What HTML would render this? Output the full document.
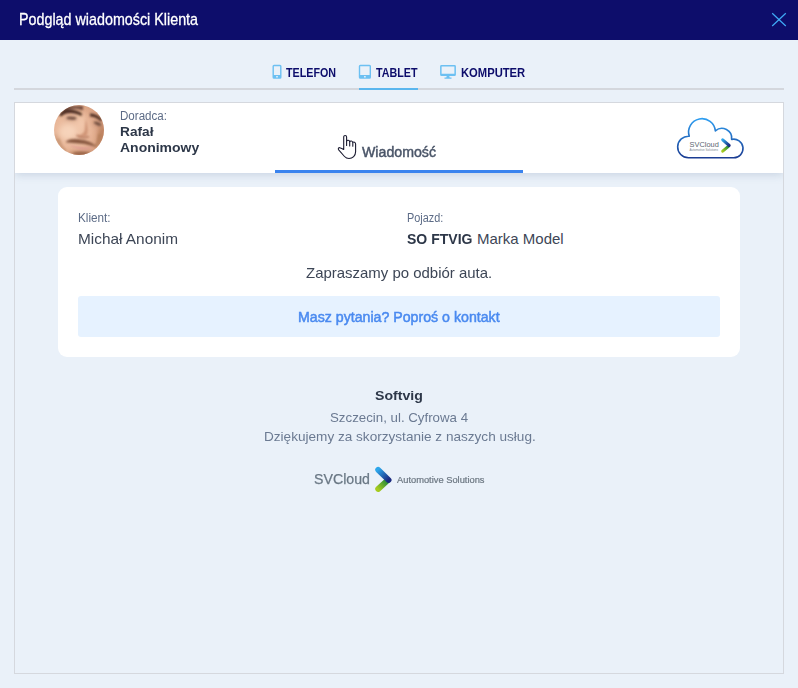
<!DOCTYPE html>
<html lang="pl">
<head>
<meta charset="utf-8">
<title>Podgląd wiadomości Klienta</title>
<style>
html,body{margin:0;padding:0;}
body{width:798px;height:688px;overflow:hidden;background:#eaf1f9;font-family:"Liberation Sans",sans-serif;position:relative;}
.abs{position:absolute;}
.t{position:absolute;white-space:nowrap;line-height:1;transform-origin:0 0;}
#hdr{left:0;top:0;width:798px;height:40px;background:#0d0d6b;}
#tabline{left:14px;top:88px;width:770px;height:2px;background:#d4d7dd;}
#tabactive{left:359px;top:88px;width:59px;height:2px;background:#5ab6ee;}
#frame{left:14px;top:102px;width:768px;height:570px;border:1px solid #d5d8de;overflow:hidden;}
#whitehdr{left:0;top:0;width:768px;height:70px;background:#fff;box-shadow:0 2px 8px rgba(120,140,170,.28);}
#msgline{left:275px;top:170px;width:248px;height:3px;background:#3a83ee;}
#card{left:58px;top:187px;width:682px;height:170px;background:#fff;border-radius:9px;}
#bluebox{left:78px;top:296px;width:642px;height:41px;background:#e6f2ff;border-radius:3px;}
.tab{font-weight:bold;font-size:13px;color:#0d0d6b;}
</style>
</head>
<body>
<div id="hdr" class="abs"></div>
<span class="t" id="title" style="left:19px;top:11px;font-size:17px;color:#fff;transform:scaleX(.842);-webkit-text-stroke:.3px #fff;">Podgląd wiadomości Klienta</span>
<svg class="abs" style="left:770px;top:11px" width="18" height="18" viewBox="0 0 18 18"><path d="M2.2 2.2 L15.8 15 M15.8 2.2 L2.2 15" stroke="#3fa9f5" stroke-width="1.250" fill="none"/></svg>

<!-- tabs -->
<svg class="abs" style="left:272px;top:64px" width="10" height="16" viewBox="0 0 10 16"><path fill-rule="evenodd" fill="#6cc0f2" d="M2 .8h6a1.500 1.500 0 0 1 1.500 1.500v11a1.500 1.500 0 0 1-1.500 1.500H2A1.500 1.500 0 0 1 .5 13.300V2.300A1.500 1.500 0 0 1 2 .8zM1.900 2.300v8.700h6.200V2.300zM4.200 12.100v1.500h1.600v-1.500z"/></svg>
<span class="t tab" style="left:286px;top:66px;transform:scaleX(0.824);">TELEFON</span>
<svg class="abs" style="left:358px;top:64px" width="14" height="16" viewBox="0 0 14 16"><path fill-rule="evenodd" fill="#6cc0f2" d="M2.300.8h9.200a1.500 1.500 0 0 1 1.500 1.500v11a1.500 1.500 0 0 1-1.500 1.500H2.300A1.500 1.500 0 0 1 .8 13.300V2.300A1.500 1.500 0 0 1 2.300.8zM2.200 2.300v8.700h9.400V2.300zM6.100 12.100v1.500h1.600v-1.500z"/></svg>
<span class="t tab" style="left:376px;top:66px;transform:scaleX(0.825);">TABLET</span>
<svg class="abs" style="left:439px;top:64px" width="18" height="16" viewBox="0 0 18 16"><path fill-rule="evenodd" fill="#6cc0f2" d="M2.500.9h13a1.400 1.400 0 0 1 1.400 1.400v8.400a1.400 1.400 0 0 1-1.400 1.400H10.300l.4 1.500h1.800v1.100H5.500v-1.100h1.800l.4-1.500H2.500a1.400 1.400 0 0 1-1.400-1.400V2.300A1.400 1.400 0 0 1 2.500.9zM2.600 2.400v7.400h12.800V2.400z"/></svg>
<span class="t tab" style="left:460.600px;top:66px;transform:scaleX(0.863);">KOMPUTER</span>
<div id="tabline" class="abs"></div>
<div id="tabactive" class="abs"></div>

<div id="frame" class="abs"><div id="whitehdr" class="abs"></div></div>
<div id="msgline" class="abs"></div>

<!-- avatar -->
<svg class="abs" style="left:54.200px;top:104.700px" width="50" height="50" viewBox="0 0 50 50">
<defs><clipPath id="av"><circle cx="25" cy="25" r="25"/></clipPath><filter id="bl" x="-50%" y="-50%" width="200%" height="200%"><feGaussianBlur stdDeviation="0.900"/></filter><filter id="bl2" x="-50%" y="-50%" width="200%" height="200%"><feGaussianBlur stdDeviation="2.600"/></filter>
<radialGradient id="sk" cx="0.360" cy="0.520" r="0.680"><stop offset="0" stop-color="#f4ceb4"/><stop offset="0.550" stop-color="#e8b698"/><stop offset="1" stop-color="#d29878"/></radialGradient></defs>
<g clip-path="url(#av)">
<rect width="50" height="50" fill="url(#sk)"/>
<g filter="url(#bl2)">
<ellipse cx="48" cy="32" rx="4" ry="13" fill="#b07450" opacity=".7"/>
<ellipse cx="1" cy="38" rx="4" ry="9" fill="#c08a66" opacity=".6"/>
<ellipse cx="27" cy="50" rx="13" ry="3.500" fill="#a87150" opacity=".85"/>
<ellipse cx="13" cy="27" rx="8" ry="7" fill="#f8d6bd" opacity=".8"/>
<ellipse cx="27" cy="17" rx="3" ry="8" fill="#f5ccb0" opacity=".8"/>
<ellipse cx="17" cy="13" rx="7" ry="3" fill="#c99a82" opacity=".7"/>
<ellipse cx="43" cy="18.500" rx="5" ry="3" fill="#c49279" opacity=".7"/>
</g>
<g filter="url(#bl)">
<path d="M5 10C9 3 20 3 28 8.500L27.500 11C20 7 12 7 7 11.500Z" fill="#4a2c20"/>
<path d="M9 1h20v4.500C22 2.500 13 3.500 8 8Z" fill="#55342a" opacity=".8"/>
<path d="M36 8.500C40 8.500 45 10.500 48 14.500L47 16.500C43 12.500 39 11.500 36 11.500Z" fill="#4e2e20"/>
<ellipse cx="17.500" cy="13.200" rx="5" ry="1.400" fill="#6e4c3e" transform="rotate(4 17.500 13.200)"/>
<ellipse cx="43.500" cy="18.600" rx="4" ry="1.400" fill="#6e4c3e" transform="rotate(24 43.500 18.600)"/>
<path d="M32 14C33.500 20 34.500 26 33 30C30.500 32 26.500 32 24 30.500C27.500 30 30.500 28 31 24Z" fill="#cb8e70" opacity=".85"/>
<path d="M12 37C15 33.800 22 34 27 35C33 35.500 39 38.500 42 41.500C38 40.800 33 38.800 27 38.300C21 37.800 16 37.500 12 37Z" fill="#85553e" stroke="#85553e" stroke-width=".6"/>
<path d="M15 40C20 42 32 43 39 42.500C34 45.800 22 45 15 40Z" fill="#dc9892"/>
<path d="M23 30.500C26 32.500 31 33 34.500 31.800" stroke="#b67a60" stroke-width="1.600" fill="none" stroke-linecap="round"/>
<path d="M4.500 35C6 40 8 43 11 45.500" stroke="#c2906e" stroke-width="3" fill="none" stroke-linecap="round" opacity=".7"/>
<path d="M45.500 30C45 35 44 38 42 41" stroke="#b07a56" stroke-width="3" fill="none" stroke-linecap="round" opacity=".7"/>
<ellipse cx="27" cy="48.500" rx="8" ry="1.800" fill="#956044" opacity=".8"/>
</g>
</g>
</svg>

<span class="t" style="left:120px;top:110px;font-size:12px;color:#5c6b86;transform:scaleX(0.965);">Doradca:</span>
<span class="t" style="left:120px;top:125px;font-size:13.500px;font-weight:bold;color:#2d3748;transform:scaleX(1.014);">Rafał</span>
<span class="t" style="left:120px;top:140.800px;font-size:13.500px;font-weight:bold;color:#2d3748;transform:scaleX(1.036);">Anonimowy</span>
<span class="t" style="left:362px;top:145px;font-size:14px;color:#4a5568;-webkit-text-stroke:.45px #4a5568;transform:scaleX(1.012);">Wiadomość</span>

<svg class="abs" style="left:330px;top:128px" width="36" height="36" viewBox="330 128 36 36"><path d="M343.700 149.500V136.900A1.450 1.450 0 0 1 346.600 136.900V141C347.200 139.900 349.300 139.900 349.700 141.600C350.400 140.600 352.400 140.700 352.800 142.500C353.600 141.600 355.600 142 355.600 144V151.800C355.600 155.500 352.600 158.500 349 158.500C346.800 158.500 345.600 157.700 344.500 156.500L338.700 149.900C337.800 148.800 338.600 147.500 339.800 147.700C341 148 342.500 148.700 343.700 149.500Z" fill="#fff" stroke="#1b1b30" stroke-width="1.100" stroke-linejoin="round"/><path d="M346.600 141V145.500M349.700 141.600V145.900M352.800 142.500V146.300" fill="none" stroke="#1b1b30" stroke-width="1.100" stroke-linecap="round"/></svg>
<svg class="abs" style="left:672px;top:112px" width="78" height="52" viewBox="672 112 78 52">
<defs>
<linearGradient id="cg" x1="0" y1="118" x2="0" y2="158" gradientUnits="userSpaceOnUse"><stop offset="0" stop-color="#2e9ff2"/><stop offset="1" stop-color="#1b3c92"/></linearGradient>
<linearGradient id="b1" x1="722.500" y1="139.800" x2="729.300" y2="145.400" gradientUnits="userSpaceOnUse"><stop offset="0" stop-color="#2da6ea"/><stop offset="1" stop-color="#1b2a80"/></linearGradient>
<linearGradient id="g1" x1="722.500" y1="151" x2="728.500" y2="146.200" gradientUnits="userSpaceOnUse"><stop offset="0" stop-color="#a6cb1e"/><stop offset="1" stop-color="#1e873d"/></linearGradient>
</defs>
<path d="M688.500 157.800A10.800 10.800 0 1 1 689.280 136.230A13.400 13.400 0 1 1 715.360 130.900A9.800 9.800 0 0 1 731.620 139.440A9.300 9.300 0 1 1 733.700 157.800Z" fill="#fff" stroke="url(#cg)" stroke-width="1.600" stroke-linejoin="round"/>
<text x="689.600" y="146.500" font-family="Liberation Sans, sans-serif" font-size="7" fill="#5b6570" textLength="29.200" lengthAdjust="spacingAndGlyphs">SVCloud</text>
<text x="689.500" y="150.500" font-family="Liberation Sans, sans-serif" font-size="3.100" fill="#7d8790" textLength="28.600" lengthAdjust="spacingAndGlyphs">Automotive Solutions</text>
<path d="M722.700 151.200L728.400 146.400" stroke="url(#g1)" stroke-width="3" stroke-linecap="round" fill="none"/>
<path d="M722.700 139.800L729.200 145.500" stroke="url(#b1)" stroke-width="3" stroke-linecap="round" fill="none"/>
</svg>
<div id="card" class="abs"></div>
<div id="bluebox" class="abs"></div>
<span class="t" style="left:78px;top:212px;font-size:12px;color:#5c6b86;transform:scaleX(0.978);">Klient:</span>
<span class="t" style="left:78px;top:231px;font-size:15px;color:#3d4656;transform:scaleX(1.025);">Michał Anonim</span>
<span class="t" style="left:407px;top:212px;font-size:12px;color:#5c6b86;transform:scaleX(0.906);">Pojazd:</span>
<span class="t" style="left:407px;top:231px;font-size:15px;font-weight:bold;color:#2d3748;transform:scaleX(.936);">SO FTVIG</span>
<span class="t" style="left:477px;top:231px;font-size:15px;color:#3d4656;">Marka Model</span>
<span class="t" style="left:306px;top:265px;font-size:15px;color:#3d4656;transform:scaleX(0.997);">Zapraszamy po odbiór auta.</span>
<span class="t" style="left:298px;top:310px;font-size:14px;color:#4a8af0;-webkit-text-stroke:.5px #4a8af0;transform:scaleX(1.012);">Masz pytania? Poproś o kontakt</span>

<span class="t" style="left:375px;top:388.500px;font-size:13.500px;font-weight:bold;color:#2d3748;transform:scaleX(1.045);">Softvig</span>
<span class="t" style="left:330px;top:410.500px;font-size:13.500px;color:#6b7a92;transform:scaleX(0.984);">Szczecin, ul. Cyfrowa 4</span>
<span class="t" style="left:264px;top:429.500px;font-size:13.500px;color:#6b7a92;transform:scaleX(1.006);">Dziękujemy za skorzystanie z naszych usług.</span>

<span class="t" style="left:314px;top:472px;font-size:14.500px;color:#6a7885;transform:scaleX(0.977);-webkit-text-stroke:.25px #6a7885;">SVCloud</span>
<span class="t" style="left:397px;top:475.700px;font-size:8.700px;color:#6c7782;-webkit-text-stroke:.2px #6c7782;transform:scaleX(1.072);">Automotive Solutions</span>
<svg class="abs" style="left:372px;top:464px" width="24" height="32" viewBox="372 464 24 32">
<defs>
<linearGradient id="b2" x1="378" y1="469.600" x2="388.700" y2="479.800" gradientUnits="userSpaceOnUse"><stop offset="0" stop-color="#2da6ea"/><stop offset="1" stop-color="#1b2a80"/></linearGradient>
<linearGradient id="g2" x1="378" y1="489.300" x2="387.500" y2="480.600" gradientUnits="userSpaceOnUse"><stop offset="0" stop-color="#a6cb1e"/><stop offset="1" stop-color="#1e873d"/></linearGradient>
</defs>
<path d="M378.150 489L387.300 480.600" stroke="url(#g2)" stroke-width="5.800" stroke-linecap="round" fill="none"/>
<path d="M378.150 469.800L388.600 480" stroke="url(#b2)" stroke-width="5.800" stroke-linecap="round" fill="none"/>
</svg>
</body>
</html>
